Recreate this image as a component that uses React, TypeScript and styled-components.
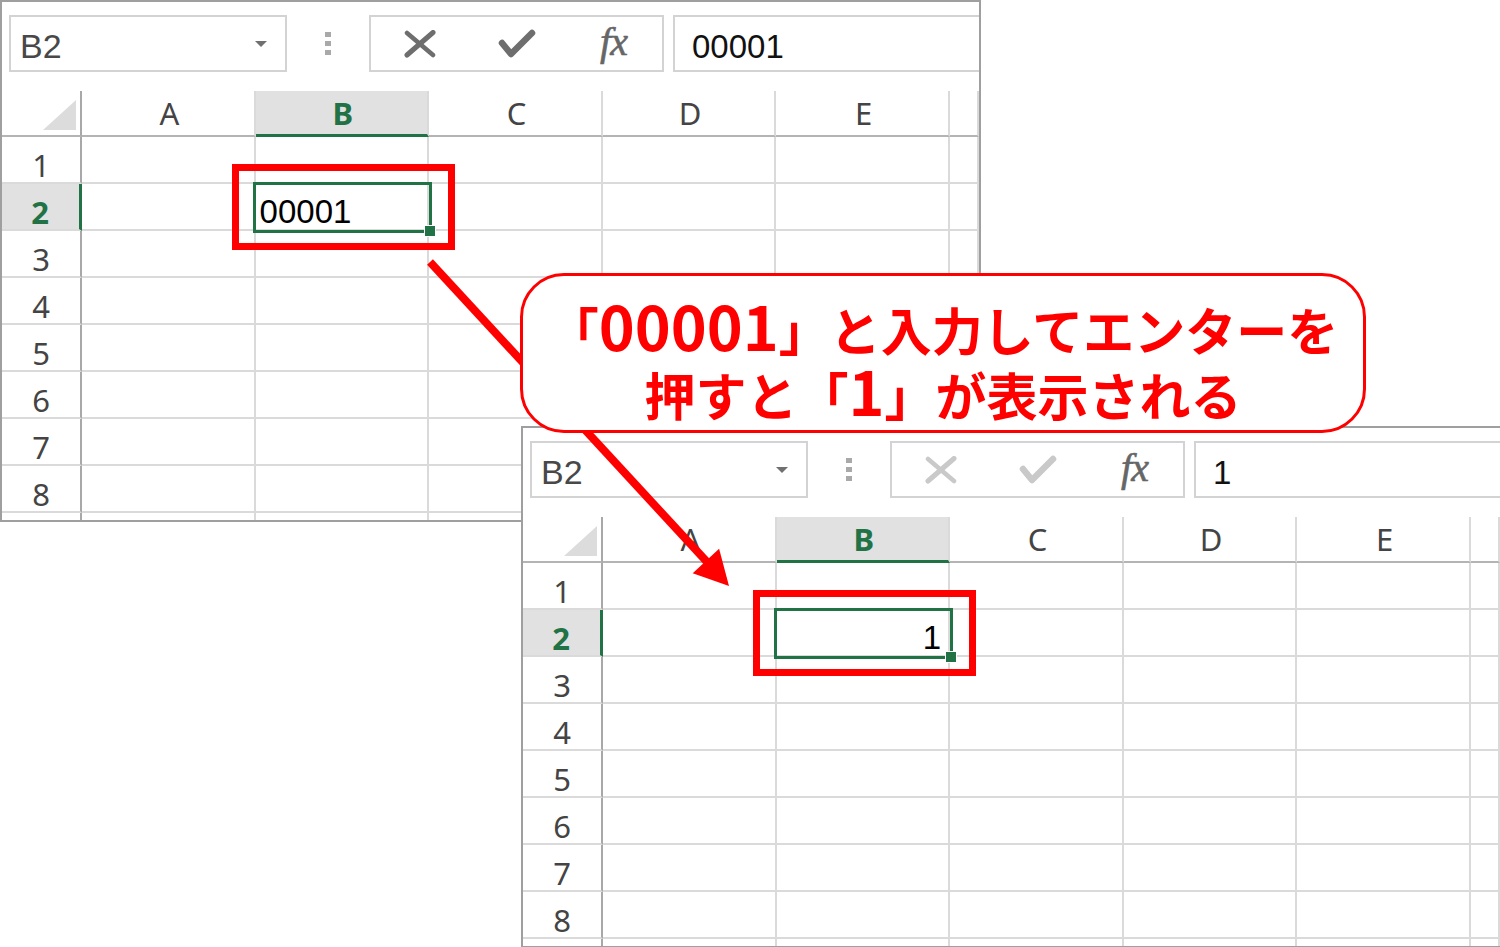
import React from 'react';
import styled, { createGlobalStyle } from 'styled-components';

const GlobalStyle = createGlobalStyle`
  html, body { margin: 0; padding: 0; background: #ffffff; }
  body { font-family: "Noto Sans", "Liberation Sans", sans-serif; }
  #root { width: 1500px; height: 947px; }
`;

const GREEN = '#217346';
const RED = '#ff0000';
const GRID = '#dadada';

const Canvas = styled.div`
  position: relative;
  width: 1500px;
  height: 947px;
  overflow: hidden;
  background: #ffffff;
`;

const Shot = styled.div<{ $x: number; $y: number }>`
  position: absolute;
  z-index: 0;
  left: ${p => p.$x}px;
  top: ${p => p.$y}px;
  width: 981px;
  height: 522px;
  box-sizing: border-box;
  border: 2px solid #9f9f9f;
  background: #ffffff;
  overflow: hidden;
  display: flex;
  flex-direction: column;
`;

const FormulaBar = styled.div`
  flex: none;
  height: 89px;
  box-sizing: border-box;
  padding: 13px 0 0 7px;
  display: flex;
  align-items: flex-start;
`;

const NameBox = styled.div`
  flex: none;
  width: 278px;
  height: 57px;
  box-sizing: border-box;
  border: 2px solid #d3d3d3;
  padding: 5px 18px 0 9px;
  display: flex;
  align-items: center;
  justify-content: space-between;
  font-family: "Liberation Sans", Arial, sans-serif;
  font-size: 34px;
  line-height: 1;
  color: #484848;
`;

const DropArrow = styled.span`
  width: 0;
  height: 0;
  margin-top: -4px;
  border-left: 6px solid transparent;
  border-right: 6px solid transparent;
  border-top: 6px solid #707070;
`;

const Grip = styled.div`
  flex: none;
  width: 82px;
  height: 57px;
  display: flex;
  flex-direction: column;
  align-items: center;
  justify-content: center;
  gap: 4px;
`;

const GripDot = styled.span`
  width: 6px;
  height: 5px;
  background: #a9a9a9;
`;

const EditButtons = styled.div`
  flex: none;
  width: 295px;
  height: 57px;
  box-sizing: border-box;
  border: 2px solid #d3d3d3;
  display: grid;
  grid-template-columns: repeat(3, 1fr);
  align-items: center;
  justify-items: center;
`;

const FxLabel = styled.span<{ $color: string }>`
  font-family: "Liberation Serif", "Times New Roman", serif;
  font-style: italic;
  font-size: 40px;
  line-height: 1;
  color: ${p => p.$color};
  letter-spacing: -1px;
  margin-top: -4px;
  -webkit-text-stroke: 0.6px ${p => p.$color};
`;

const FormulaInput = styled.div`
  flex: 1;
  height: 57px;
  margin: 0 -12px 0 9px;
  box-sizing: border-box;
  border: 2px solid #d3d3d3;
  padding: 6px 0 0 17px;
  display: flex;
  align-items: center;
  font-family: "Liberation Sans", Arial, sans-serif;
  font-size: 33px;
  line-height: 1;
  color: #111111;
`;

const Sheet = styled.div`
  flex: 1;
  display: grid;
  grid-template-columns: 80px repeat(5, 173.6px) 1fr;
  grid-template-rows: 46px repeat(8, 47px) 1fr;
`;

const Corner = styled.div`
  box-sizing: border-box;
  border-right: 2px solid #a8a8a8;
  border-bottom: 2px solid #b4b4b4;
  padding: 0 4px 5px 0;
  display: flex;
  align-items: flex-end;
  justify-content: flex-end;
`;

const CornerTriangle = styled.span`
  width: 33px;
  height: 30px;
  background: #dcdcdc;
  clip-path: polygon(100% 0, 100% 100%, 0 100%);
`;

const ColHeader = styled.div<{ $active?: boolean }>`
  box-sizing: border-box;
  border-right: 2px solid ${GRID};
  border-bottom: ${p => (p.$active ? `3px solid ${GREEN}` : '2px solid #b4b4b4')};
  background: ${p => (p.$active ? '#e1e1e1' : '#ffffff')};
  color: ${p => (p.$active ? GREEN : '#444444')};
  font-weight: ${p => (p.$active ? 700 : 400)};
  font-size: 31px;
  line-height: 1;
  display: flex;
  align-items: center;
  justify-content: center;
  padding: ${p => (p.$active ? 1 : 0)}px 0 0 3px;
`;

const RowHeader = styled.div<{ $active?: boolean }>`
  box-sizing: border-box;
  border-right: ${p => (p.$active ? `3px solid ${GREEN}` : '2px solid #a8a8a8')};
  border-bottom: 2px solid ${GRID};
  background: ${p => (p.$active ? '#e1e1e1' : '#ffffff')};
  color: ${p => (p.$active ? GREEN : '#444444')};
  font-weight: ${p => (p.$active ? 700 : 400)};
  font-size: 31px;
  line-height: 1;
  display: flex;
  align-items: center;
  justify-content: center;
  padding: 12px ${p => (p.$active ? 1 : 0)}px 0 0;
`;

const Cell = styled.div`
  position: relative;
  box-sizing: border-box;
  border-right: 2px solid ${GRID};
  border-bottom: 2px solid ${GRID};
`;

const Selection = styled.div<{ $align: 'left' | 'right' }>`
  position: absolute;
  z-index: 1;
  left: -3px;
  right: -5px;
  top: -2px;
  bottom: -4px;
  border: 3px solid ${GREEN};
  box-sizing: border-box;
  display: flex;
  align-items: center;
  justify-content: ${p => (p.$align === 'right' ? 'flex-end' : 'flex-start')};
  padding: 7px 9px 0 4px;
  font-family: "Liberation Sans", Arial, sans-serif;
  font-size: 33px;
  line-height: 1;
  color: #000000;
`;

const FillHandle = styled.span`
  position: absolute;
  right: -7px;
  bottom: -7px;
  width: 10px;
  height: 10px;
  background: ${GREEN};
  border: 1px solid #ffffff;
`;

const Highlight = styled.div`
  position: absolute;
  z-index: 2;
  left: 230px;
  top: 162px;
  width: 223px;
  height: 86px;
  box-sizing: border-box;
  border: 7px solid ${RED};
`;

const ArrowLayer = styled.svg`
  position: absolute;
  left: 0;
  top: 0;
  width: 1500px;
  height: 947px;
  pointer-events: none;
`;

const Callout = styled.div`
  position: absolute;
  left: 520px;
  top: 273px;
  width: 846px;
  height: 160px;
  box-sizing: border-box;
  border: 3px solid ${RED};
  border-radius: 44px;
  background: #ffffff;
  padding-top: 8px;
  display: flex;
  flex-direction: column;
  align-items: center;
  justify-content: center;
  font-family: "Noto Sans CJK JP", "Noto Sans", sans-serif;
  font-weight: 700;
  font-size: 51px;
  line-height: 65px;
  color: ${RED};
  white-space: nowrap;
`;

const CalloutLine = styled.div`
  height: 65px;
`;

const Digits = styled.span`
  font-size: 61px;
  line-height: 65px;
`;

function CancelIcon({ color }: { color: string }) {
  return (
    <svg width="32" height="28" viewBox="0 0 32 28">
      <path d="M3 3 L29 25" stroke={color} strokeWidth="4.5" strokeLinecap="round" />
      <path d="M29 2.5 L3 25" stroke={color} strokeWidth="5" strokeLinecap="round" />
    </svg>
  );
}

function EnterIcon({ color }: { color: string }) {
  return (
    <svg width="38" height="30" viewBox="0 0 38 30">
      <path
        d="M4 14 L13 25 L34 4"
        fill="none"
        stroke={color}
        strokeWidth="6.5"
        strokeLinecap="round"
        strokeLinejoin="round"
      />
    </svg>
  );
}

type ShotProps = {
  x: number;
  y: number;
  formula: string;
  value: string;
  align: 'left' | 'right';
  editing: boolean;
};

const COLS = ['A', 'B', 'C', 'D', 'E', ''];
const ROWS = [1, 2, 3, 4, 5, 6, 7, 8, 0];

function ExcelShot({ x, y, formula, value, align, editing }: ShotProps) {
  const iconColor = editing ? '#6e6e6e' : '#c9c9c9';
  return (
    <Shot $x={x} $y={y}>
      <FormulaBar>
        <NameBox>
          <span>B2</span>
          <DropArrow />
        </NameBox>
        <Grip>
          <GripDot />
          <GripDot />
          <GripDot />
        </Grip>
        <EditButtons>
          <CancelIcon color={iconColor} />
          <EnterIcon color={iconColor} />
          <FxLabel $color="#666666">fx</FxLabel>
        </EditButtons>
        <FormulaInput>{formula}</FormulaInput>
      </FormulaBar>
      <Sheet>
        <Corner>
          <CornerTriangle />
        </Corner>
        {COLS.map((c, i) => (
          <ColHeader key={`h${i}`} $active={c === 'B'}>
            {c}
          </ColHeader>
        ))}
        {ROWS.map((r, ri) => (
          <React.Fragment key={`r${ri}`}>
            <RowHeader $active={r === 2}>{r ? r : ''}</RowHeader>
            {COLS.map((c, ci) => (
              <Cell key={`c${ri}-${ci}`}>
                {r === 2 && c === 'B' && (
                  <Selection $align={align}>
                    {value}
                    <FillHandle />
                  </Selection>
                )}
              </Cell>
            ))}
          </React.Fragment>
        ))}
      </Sheet>
      <Highlight />
    </Shot>
  );
}

export default function App() {
  return (
    <>
      <GlobalStyle />
      <Canvas>
        <ExcelShot x={0} y={0} formula="00001" value="00001" align="left" editing />
        <ExcelShot x={521} y={426} formula="1" value="1" align="right" editing={false} />
        <ArrowLayer viewBox="0 0 1500 947">
          <line x1="430" y1="262" x2="708" y2="563" stroke={RED} strokeWidth="8" />
          <polygon points="692.7,573.2 729,586 719.1,548.8" fill={RED} />
        </ArrowLayer>
        <Callout>
          <CalloutLine>
            「<Digits>00001</Digits>」と入力してエンターを
          </CalloutLine>
          <CalloutLine>
            押すと「<Digits>1</Digits>」が表示される
          </CalloutLine>
        </Callout>
      </Canvas>
    </>
  );
}
